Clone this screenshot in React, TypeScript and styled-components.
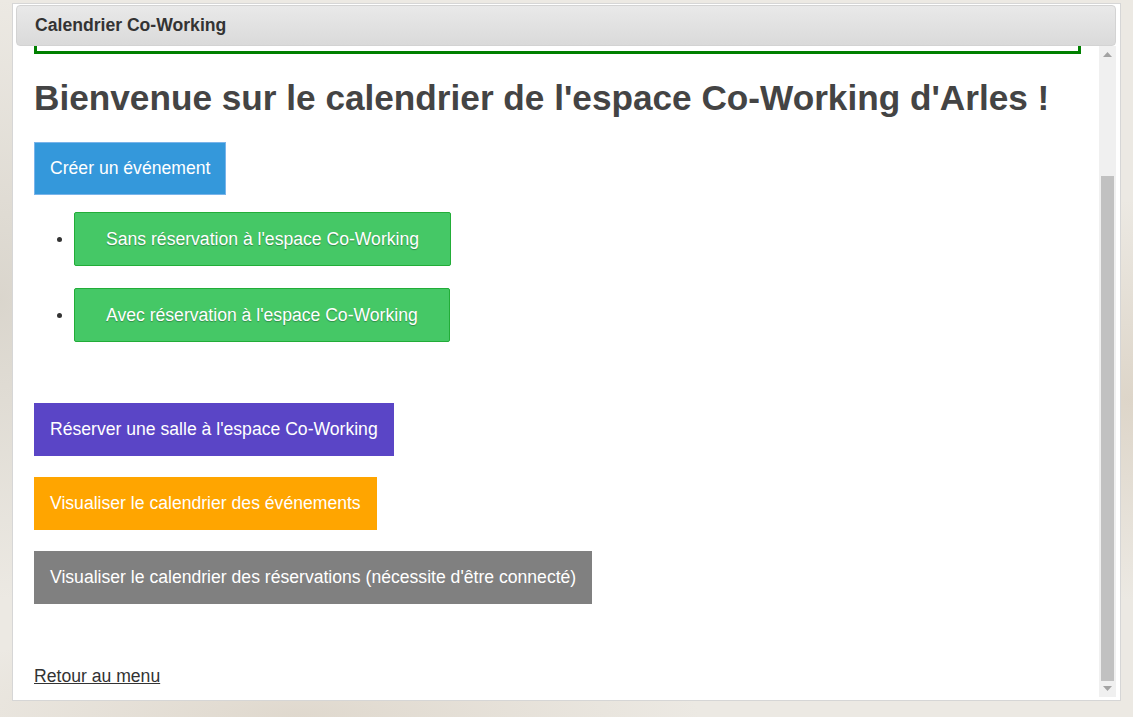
import React from "react";
import styled, { createGlobalStyle } from "styled-components";

const GlobalStyle = createGlobalStyle`
  html, body {
    margin: 0;
    padding: 0;
    height: 100%;
  }
  body {
    font-family: "Liberation Sans", Arial, sans-serif;
    font-size: 17.6px;
    color: #333;
    background:
      radial-gradient(ellipse 300px 200px at 1130px 400px, rgba(215, 205, 190, 0.7), transparent),
      radial-gradient(ellipse 200px 300px at 0px 300px, rgba(210, 205, 195, 0.7), transparent),
      radial-gradient(ellipse 400px 100px at 300px 717px, rgba(220, 212, 200, 0.8), transparent),
      #ece9e3;
    overflow: hidden;
  }
`;

const Page = styled.div`
  padding: 3px 12px 0 12px;
  width: 1109px;
`;

const Dialog = styled.div`
  box-sizing: border-box;
  width: 1109px;
  height: 698px;
  background: #fff;
  border: 1px solid #d6d6d6;
  padding: 1px 4px 3px 3px;
  display: flex;
  flex-direction: column;
`;

const TitleBar = styled.div`
  box-sizing: border-box;
  height: 41px;
  flex: none;
  display: flex;
  align-items: center;
  padding-left: 18px;
  border: 1px solid #d3d3d3;
  border-radius: 4px;
  background: linear-gradient(#e9e9e9, #dadada);
  font-weight: bold;
  font-size: 17.6px;
  color: #333;
`;

const Body = styled.div`
  flex: 1;
  display: flex;
  min-height: 0;
`;

const Content = styled.div`
  flex: 1;
  padding: 0 18px;
  overflow: hidden;
`;

const Banner = styled.div`
  height: 5px;
  border: 3px solid #008000;
  border-top: none;
`;

const Title = styled.h1`
  margin: 24px 0 25px 0;
  font-size: 35.2px;
  line-height: 39px;
  font-weight: bold;
  color: #444;
  white-space: nowrap;
`;

const Button = styled.a<{ $bg: string; $border?: string }>`
  display: inline-block;
  box-sizing: border-box;
  padding: 15px 15px;
  line-height: 21px;
  font-size: 17.6px;
  color: #fff;
  text-decoration: none;
  background: ${(p) => p.$bg};
  border: 1px solid ${(p) => p.$border ?? p.$bg};
`;

const ChoiceList = styled.ul`
  margin: 17px 0 0 0;
  padding-left: 40px;
  color: #333;
`;

const ChoiceItem = styled.li`
  margin-bottom: 22px;
  line-height: 22px;
`;

const ChoiceButton = styled.a`
  display: inline-block;
  vertical-align: middle;
  padding: 15px 31px;
  line-height: 22px;
  font-size: 17.6px;
  color: #fff;
  text-decoration: none;
  background: #45c866;
  border: 1px solid #22ad38;
  border-radius: 2px;
  text-shadow: 0 1px 1px rgba(0, 0, 0, 0.3);
`;

const ActionStack = styled.div`
  margin-top: 61px;
  display: flex;
  flex-direction: column;
  align-items: flex-start;
  gap: 21px;
`;

const BackLink = styled.a`
  display: inline-block;
  margin-top: 62px;
  color: #333;
  text-decoration: underline;
  font-size: 17.6px;
`;

const Scrollbar = styled.div`
  width: 17px;
  flex: none;
  background: #f0f0f0;
  display: flex;
  flex-direction: column;
`;

const ArrowButton = styled.div`
  height: 17px;
  flex: none;
  display: flex;
  align-items: center;
  justify-content: center;
`;

const Track = styled.div`
  flex: 1;
  display: flex;
  flex-direction: column;
  justify-content: flex-end;
  margin-bottom: -1px;
`;

const Thumb = styled.div`
  height: 505px;
  margin: 0 2px;
  background: #c1c1c1;
`;

const Arrow = ({ up }: { up?: boolean }) => (
  <svg width="9" height="5" viewBox="0 0 9 5">
    {up ? (
      <polygon points="0,5 9,5 4.5,0" fill="#a3a3a3" />
    ) : (
      <polygon points="0,0 9,0 4.5,5" fill="#a3a3a3" />
    )}
  </svg>
);

export default function App() {
  return (
    <>
      <GlobalStyle />
      <Page>
        <Dialog>
          <TitleBar>Calendrier Co-Working</TitleBar>
          <Body>
            <Content>
              <Banner />
              <Title>Bienvenue sur le calendrier de l'espace Co-Working d'Arles !</Title>
              <Button href="#" $bg="#3498db" $border="#79b4ea">
                Créer un événement
              </Button>
              <ChoiceList>
                <ChoiceItem>
                  <ChoiceButton href="#">Sans réservation à l'espace Co-Working</ChoiceButton>
                </ChoiceItem>
                <ChoiceItem>
                  <ChoiceButton href="#">Avec réservation à l'espace Co-Working</ChoiceButton>
                </ChoiceItem>
              </ChoiceList>
              <ActionStack>
                <Button href="#" $bg="#5a45c6">
                  Réserver une salle à l'espace Co-Working
                </Button>
                <Button href="#" $bg="#ffa500">
                  Visualiser le calendrier des événements
                </Button>
                <Button href="#" $bg="#808080">
                  Visualiser le calendrier des réservations (nécessite d'être connecté)
                </Button>
              </ActionStack>
              <BackLink href="#">Retour au menu</BackLink>
            </Content>
            <Scrollbar>
              <ArrowButton>
                <Arrow up />
              </ArrowButton>
              <Track>
                <Thumb />
              </Track>
              <ArrowButton>
                <Arrow />
              </ArrowButton>
            </Scrollbar>
          </Body>
        </Dialog>
      </Page>
    </>
  );
}
